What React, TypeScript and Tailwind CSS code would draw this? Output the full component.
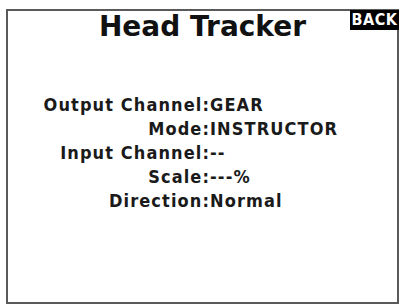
import React from 'react';

const rows: [string, string][] = [
  ['Output Channel', 'GEAR'],
  ['Mode', 'INSTRUCTOR'],
  ['Input Channel', '--'],
  ['Scale', '---%'],
  ['Direction', 'Normal'],
];

const App: React.FC = () => {
  return (
    <div className="w-[401px] h-[306px] bg-white pl-[6px] pt-[9px]">
      <div className="relative w-[393px] h-[295px] border-2 border-[#5a5a5a]">
        {/* Title */}
        <div className="flex justify-center">
          <h1
            className="text-[28px] leading-[32px] font-bold text-[#111]"
            style={{ fontFamily: '"DejaVu Sans", sans-serif' }}
          >
            Head Tracker
          </h1>
        </div>

        {/* Back button */}
        <div
          className="absolute -top-[1px] -right-[2px] w-[49px] h-[20px] bg-black text-white flex items-center justify-center text-[16px] leading-none font-bold tracking-[0.5px]"
          style={{ fontFamily: '"DejaVu Sans Condensed", "DejaVu Sans", sans-serif' }}
        >
          BACK
        </div>

        {/* Settings */}
        <div
          className="grid grid-cols-[202px_1fr] mt-[53px] gap-y-[6px] text-[18px] leading-[18px] font-bold text-[#1a1a1a] tracking-[1.1px]"
          style={{ fontFamily: '"DejaVu Sans Condensed", "DejaVu Sans", sans-serif' }}
        >
          {rows.map(([label, value]) => (
            <React.Fragment key={label}>
              <div className="text-right">{label}:</div>
              <div className="pl-[0px]">{value}</div>
            </React.Fragment>
          ))}
        </div>
      </div>
    </div>
  );
};

export default App;
